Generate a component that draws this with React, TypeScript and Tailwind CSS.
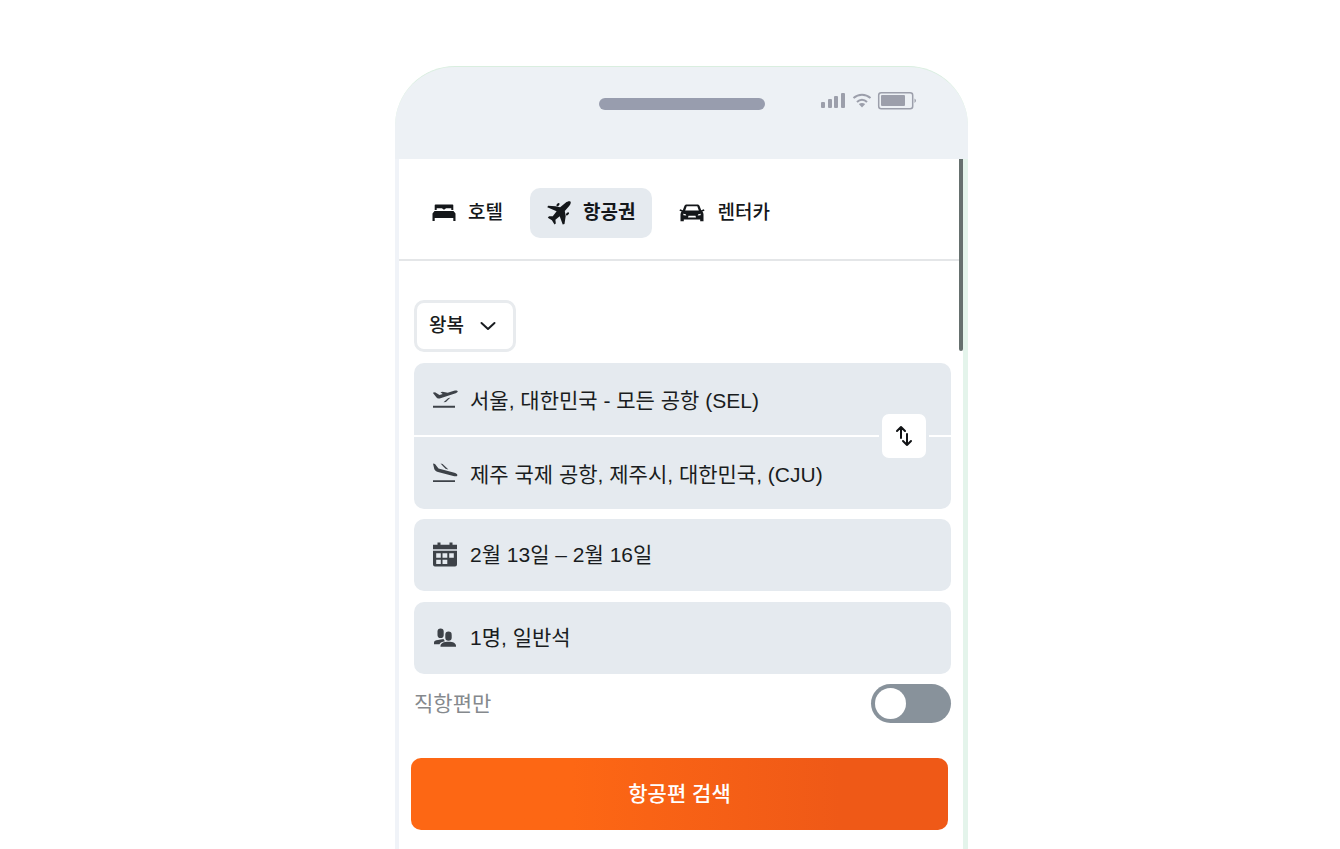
import { useState } from "react";
import type { ReactNode } from "react";
import { clsx } from "clsx";

const BedIcon = () => (
  <svg viewBox="0 0 24 24" fill="currentColor" className="h-6 w-6">
    <path d="M3.500 3.500h17a.8.8 0 0 1 .8.8V9h-2V7.300h-5.200L12 8.800 9.900 7.300H4.700V9h-2V4.300a.8.8 0 0 1 .8-.8z" />
    <path d="M2.500 10h19l2 2.500V20h-2.200v-3H2.700v3H.500v-7.500z" />
  </svg>
);

const PlaneIcon = () => (
  <svg viewBox="0 0 24 24" fill="currentColor" className="h-6 w-6">
    <path d="M23.400.600c.8.800.2 2.700-1.200 4.500l-4.400 5 .9 4.900-1.200 8-1.800.6-3-8.300-4.300 3.500.4 3.700-1.300 1.100-2.600-4.300L.8 16.700l1.200-1.500 3.800.1 3.800-5L.300 6.300l.8-1.600 7.400.5 4.600 1L18.600 1.700C20.400.200 22.600-.200 23.400.600z" />
    <ellipse cx="11" cy="3.600" rx="1.900" ry="1.100" transform="rotate(-45 11 3.600)" />
    <ellipse cx="20.500" cy="12.800" rx="1.900" ry="1.100" transform="rotate(-45 20.500 12.800)" />
  </svg>
);

const CarIcon = () => (
  <svg viewBox="0 0 26 24" fill="currentColor" className="h-6 w-[26px]">
    <path
      fillRule="evenodd"
      d="M7.800 3.500h10.400c1.300 0 2.100.6 2.500 1.700l1.500 4 2.700-1 .6 1.500-2.200.9c.8.8 1.200 1.800 1.200 3v6.700h-3.300V18.500H4.800v1.800H1.500v-6.700c0-1.200.4-2.200 1.200-3L.5 9.700l.6-1.500 2.700 1 1.500-4c.4-1.100 1.200-1.700 2.500-1.700zM7.700 5.200 6.200 9.600h13.600l-1.500-4.400zM4.200 12.800l.3 1.500 2.800.3-.6-1.400zM21.800 12.800l-.3 1.500-2.800.3.600-1.400zM9.500 14.800l-.5 1.700h8l-.5-1.700z"
    />
  </svg>
);

const TakeoffIcon = () => (
  <svg viewBox="0 0 26 24" fill="currentColor" className="h-6 w-[26px] shrink-0">
    <path d="M.800 5.700l2.200-.4 4.500 2.700 3.200-1-2.200-1.800 2-.4 5.200 1L22 3.700c2-.6 3.500-.3 3.700.5.200.7-.7 1.500-2 2L7.700 11.400c-1.500.5-2.600.1-3.400-1.100z" />
    <path d="M11.500 15.300l4.500-4 2.500-.800-4.600 4.400z" />
    <path d="M1 18.800h22v1.900H1z" />
  </svg>
);

const LandingIcon = () => (
  <svg viewBox="0 0 26 24" fill="currentColor" className="h-6 w-[26px] shrink-0">
    <path d="M1 2.500l2 .6 3.500 4.500 15 3.800c2.500.7 4.200 1.800 3.800 3-.3 1-2.200 1-4 .6L6 11c-2-.6-3.200-1.500-3.800-3.200z" />
    <path d="M8.500 2.600l2.100.4 5.800 5.500-2.900-.7z" />
    <path d="M1 19.200h22v1.900H1z" />
  </svg>
);

const CalendarIcon = () => (
  <svg viewBox="0 0 26 26" fill="currentColor" className="h-[26px] w-[26px] shrink-0">
    <path d="M5.500.500h3v2.300h9V.500h3v2.300H25V7.300H1V2.800h4.500z" />
    <path
      fillRule="evenodd"
      d="M1 8.700h24v13.800a2 2 0 0 1-2 2H3a2 2 0 0 1-2-2zM4.200 11.300v4.500h4.600v-4.500zM10.500 11.300v4.500h4.800v-4.500zM17.200 11.300v4.500h4.600v-4.500zM4.200 17.700v4.300h4.600v-4.300zM10.500 17.700v4.300h4.800v-4.300z"
    />
  </svg>
);

const PeopleIcon = () => (
  <svg viewBox="0 0 26 24" fill="currentColor" className="h-6 w-[26px] shrink-0">
    <rect x="5.500" y="2.500" width="6.200" height="9.500" rx="3.100" />
    <rect x="13.300" y="5.500" width="6.400" height="9.200" rx="3.200" />
    <path d="M2 18.300v-1.800c0-1.600 1.500-2.200 4-2.600l5.500-1c.4.900.9 1.700 1.500 2.400-3 .400-4.700 1.300-5.500 3z" />
    <path d="M8.500 20.800v-.800c0-2.700 3.300-4.200 8-4.200s7.500 1.500 7.500 4.200v.800z" />
  </svg>
);

const SwapIcon = () => (
  <svg
    viewBox="0 0 20 24"
    fill="none"
    stroke="currentColor"
    strokeWidth="2"
    strokeLinecap="round"
    strokeLinejoin="round"
    className="h-6 w-5"
  >
    <path d="M7 14V3M3 7l4-4 4 4M13 10v11M9 17l4 4 4-4" />
  </svg>
);

const StatusIcons = () => (
  <svg viewBox="0 0 98 20" className="h-5 w-[98px] text-[#9c9fab]" fill="currentColor">
    <rect x="1" y="11" width="4" height="6" rx="1" />
    <rect x="8" y="8" width="4" height="9" rx="1" />
    <rect x="14" y="5" width="4" height="12" rx="1" />
    <rect x="21" y="2" width="4" height="15" rx="1" />
    <g fill="none" stroke="currentColor" strokeWidth="2">
      <path d="M33.500 7c5-4.500 12-4.500 17 0M37 11c3-3 7-3 10 0" />
      <rect x="58.700" y="1.700" width="34" height="16" rx="2.500" strokeWidth="1.500" />
    </g>
    <path d="M38.800 13q3.200-2.200 6.400 0L42 16.500z" />
    <rect x="61" y="4" width="24" height="11" rx="1" />
    <path d="M94.500 7.500q3 2.200 0 4.500z" />
  </svg>
);

const tabs = [
  { id: "hotel", label: "호텔", icon: <BedIcon /> },
  { id: "flight", label: "항공권", icon: <PlaneIcon /> },
  { id: "car", label: "렌터카", icon: <CarIcon /> },
];

interface AirportFieldProps {
  label: string;
  icon: ReactNode;
  defaultValue: string;
}

function AirportField({ label, icon, defaultValue }: AirportFieldProps) {
  return (
    <label className="flex items-center gap-3 bg-[#e5eaef] px-[18px] py-5 text-[#3d4248]">
      {icon}
      <input
        type="text"
        aria-label={label}
        defaultValue={defaultValue}
        className="h-8 min-w-0 flex-1 bg-transparent text-[21px] text-[#191c20] outline-none"
      />
    </label>
  );
}

function FieldButton({ icon, children }: { icon: ReactNode; children: ReactNode }) {
  return (
    <button
      type="button"
      className="flex w-full items-center gap-3 rounded-[10px] bg-[#e5eaef] px-[18px] py-5 text-left text-[#3d4248]"
    >
      {icon}
      <span className="text-[21px] leading-8 text-[#191c20]">{children}</span>
    </button>
  );
}

export default function App() {
  const [activeTab, setActiveTab] = useState("flight");
  const [directOnly, setDirectOnly] = useState(false);

  return (
    <main className="flex min-h-screen justify-center bg-white pt-[66px] pl-[23px] font-['Liberation_Sans','Noto_Sans_CJK_KR',sans-serif]">
      <div className="flex w-full max-w-[573px] flex-col">
        <header className="grid h-[93px] grid-cols-[1fr_166px_1fr] items-start rounded-t-[60px] border-t border-[#d9eedf] bg-[#edf1f5] pt-6">
          <div className="col-start-2 mt-[7px] h-3 rounded-full bg-[#989dae]" />
          <div className="flex justify-end pr-[50px]">
            <StatusIcons />
          </div>
        </header>

        <div className="relative flex-1 border-r-[5px] border-l-4 border-r-[#e4f4eb] border-l-[#f0f3f8] bg-white">
          <div className="absolute top-0 right-0 h-48 w-1 rounded-b-sm bg-[#66706e]" />

          <nav className="flex gap-[10px] border-b-2 border-[#e4e6e8] px-4 pt-[29px] pb-[21px]">
            {tabs.map((tab) => (
              <button
                key={tab.id}
                type="button"
                onClick={() => setActiveTab(tab.id)}
                className={clsx(
                  "flex h-[50px] items-center gap-3 rounded-[10px] px-[17px] text-[19px] text-[#14171a]",
                  activeTab === tab.id ? "bg-[#e5eaef] font-bold" : "font-medium"
                )}
              >
                {tab.icon}
                {tab.label}
              </button>
            ))}
          </nav>

          <form className="pt-[39px] pr-3 pl-[15px]" onSubmit={(e) => e.preventDefault()}>
            <div className="relative flex w-[102px] items-center">
              <select
                aria-label="여정"
                className="h-[52px] w-full appearance-none rounded-[10px] border-[3px] border-[#e8ebee] bg-white pl-3 text-[19px] font-medium text-[#191c20] outline-none"
              >
                <option>왕복</option>
                <option>편도</option>
              </select>
              <svg
                viewBox="0 0 16 10"
                fill="none"
                stroke="#191c20"
                strokeWidth="2"
                strokeLinecap="round"
                strokeLinejoin="round"
                className="pointer-events-none absolute right-5 h-[10px] w-4"
              >
                <path d="M1.500 2 8 8l6.500-6" />
              </svg>
            </div>

            <div className="relative mt-[11px] flex flex-col gap-[2px] overflow-hidden rounded-[10px]">
              <AirportField
                label="출발지"
                icon={<TakeoffIcon />}
                defaultValue="서울, 대한민국 - 모든 공항 (SEL)"
              />
              <AirportField
                label="도착지"
                icon={<LandingIcon />}
                defaultValue="제주 국제 공항, 제주시, 대한민국, (CJU)"
              />
              <button
                type="button"
                aria-label="출발지와 도착지 바꾸기"
                className="absolute top-1/2 right-[22px] flex h-[50px] w-[50px] -translate-y-1/2 items-center justify-center rounded-[10px] border-[3px] border-[#e5eaef] bg-white text-[#111315]"
              >
                <SwapIcon />
              </button>
            </div>

            <div className="mt-[10px] flex flex-col gap-[11px]">
              <FieldButton icon={<CalendarIcon />}>2월 13일 – 2월 16일</FieldButton>
              <FieldButton icon={<PeopleIcon />}>1명, 일반석</FieldButton>
            </div>

            <label className="mt-[10px] flex items-center justify-between text-[21px] text-[#85898d]">
              직항편만
              <input
                type="checkbox"
                checked={directOnly}
                onChange={(e) => setDirectOnly(e.target.checked)}
                className="peer sr-only"
              />
              <span className="flex h-[39px] w-20 items-center rounded-full bg-[#88929b] px-1 peer-checked:justify-end peer-checked:bg-[#fb6514]">
                <span className="h-[31px] w-[31px] rounded-full bg-white" />
              </span>
            </label>

            <button
              type="submit"
              className="mt-[35px] -ml-[3px] h-[72px] w-full rounded-[10px] bg-linear-to-r from-[#fd6714] from-30% to-[#ef5917] to-80% text-[21px] font-medium text-white"
            >
              항공편 검색
            </button>
          </form>
        </div>
      </div>
    </main>
  );
}
